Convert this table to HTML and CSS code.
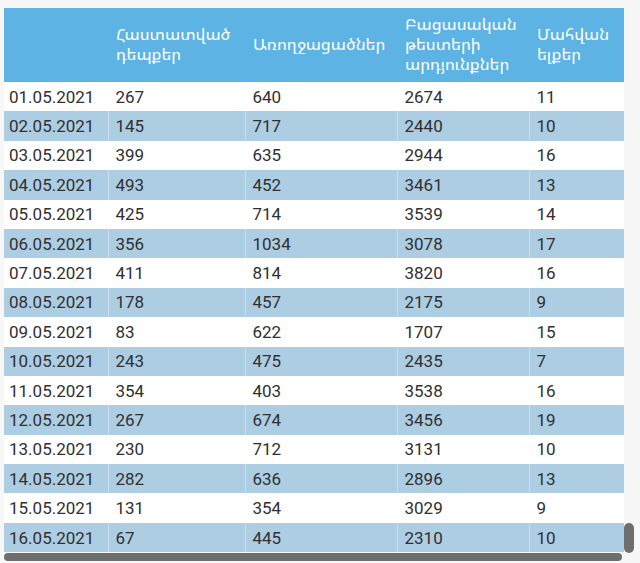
FILE: index.html
```html
<!DOCTYPE html>
<html lang="hy">
<head>
<meta charset="utf-8">
<title>Covid</title>
<link rel="stylesheet" href="styles.css">
</head>
<body>
<div class="wrap">
<table class="data">
<colgroup>
<col class="c1"><col class="c2"><col class="c3"><col class="c4"><col class="c5">
</colgroup>
<thead>
<tr>
<th></th>
<th>Հաստատված<br>դեպքեր</th>
<th>Առողջացածներ</th>
<th>Բացասական<br>թեստերի<br>արդյունքներ</th>
<th>Մահվան<br>ելքեր</th>
</tr>
</thead>
<tbody>
<tr><td>01.05.2021</td><td>267</td><td>640</td><td>2674</td><td>11</td></tr>
<tr><td>02.05.2021</td><td>145</td><td>717</td><td>2440</td><td>10</td></tr>
<tr><td>03.05.2021</td><td>399</td><td>635</td><td>2944</td><td>16</td></tr>
<tr><td>04.05.2021</td><td>493</td><td>452</td><td>3461</td><td>13</td></tr>
<tr><td>05.05.2021</td><td>425</td><td>714</td><td>3539</td><td>14</td></tr>
<tr><td>06.05.2021</td><td>356</td><td>1034</td><td>3078</td><td>17</td></tr>
<tr><td>07.05.2021</td><td>411</td><td>814</td><td>3820</td><td>16</td></tr>
<tr><td>08.05.2021</td><td>178</td><td>457</td><td>2175</td><td>9</td></tr>
<tr><td>09.05.2021</td><td>83</td><td>622</td><td>1707</td><td>15</td></tr>
<tr><td>10.05.2021</td><td>243</td><td>475</td><td>2435</td><td>7</td></tr>
<tr><td>11.05.2021</td><td>354</td><td>403</td><td>3538</td><td>16</td></tr>
<tr><td>12.05.2021</td><td>267</td><td>674</td><td>3456</td><td>19</td></tr>
<tr><td>13.05.2021</td><td>230</td><td>712</td><td>3131</td><td>10</td></tr>
<tr><td>14.05.2021</td><td>282</td><td>636</td><td>2896</td><td>13</td></tr>
<tr><td>15.05.2021</td><td>131</td><td>354</td><td>3029</td><td>9</td></tr>
<tr><td>16.05.2021</td><td>67</td><td>445</td><td>2310</td><td>10</td></tr>
</tbody>
</table>
</div>
<div class="hscroll"></div>
<div class="vscroll"></div>
</body>
</html>
```
FILE: styles.css
```css
html, body {
  margin: 0;
  padding: 0;
  background: #f7f7f7;
  font-family: Roboto, "Noto Sans Armenian", "Noto Sans", "DejaVu Sans", sans-serif;
  color: #303030;
}
.wrap {
  padding: 8px 0 0 4px;
}
.data {
  width: 620px;
  border-collapse: collapse;
  border-spacing: 0;
  table-layout: fixed;
  font-size: 17px;
}
.c1 { width: 104px; }
.c2 { width: 137px; }
.c3 { width: 152px; }
.c4 { width: 132px; }
.c5 { width: 95px; }
.data th {
  background: #5cb3e4;
  color: #ffffff;
  font-weight: normal;
  text-align: left;
  vertical-align: middle;
  height: 74px;
  padding: 0 8px;
  line-height: 20px;
  font-size: 16.5px;
}
.data td {
  height: 29.4px;
  padding: 0 0 0 7px;
  line-height: 20px;
  vertical-align: middle;
  background: #ffffff;
  white-space: nowrap;
}
.data td + td {
  border-left: 1px solid rgba(255, 255, 255, 0.35);
}
.data td:first-child {
  padding-left: 5px;
}
.data tbody tr:nth-child(even) td {
  background: #adcde3;
}
.hscroll {
  position: fixed;
  left: 4px;
  top: 553px;
  width: 618px;
  height: 8px;
  border-radius: 4px;
  background: #6e6e6e;
}
.vscroll {
  position: fixed;
  left: 624px;
  top: 523px;
  width: 10px;
  height: 30px;
  border-radius: 5px;
  background: #6e6e6e;
}
```
